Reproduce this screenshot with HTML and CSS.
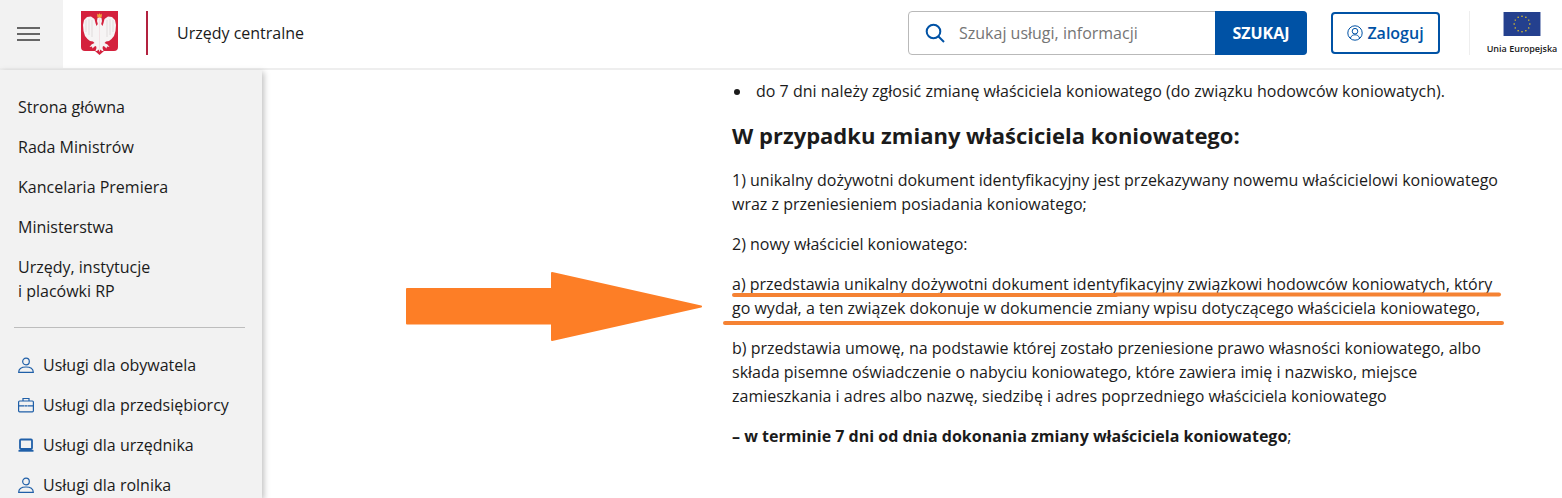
FILE: index.html
```html
<!DOCTYPE html>
<html lang="pl">

<head>
    <meta charset="UTF-8">
    <title>Urzędy centralne</title>
    <link rel="stylesheet" href="styles.css">
</head>

<body>
    <header class="topbar">
        <div class="burger">
            <span></span>
            <span></span>
            <span></span>
        </div>
        <svg class="emblem" viewBox="0 0 37 44">
            <path d="M0 0H37V36Q37 40 33 40H23L18.500 44L14 40H4Q0 40 0 36Z" fill="#d4213d" />
            <!-- orzel: polowa i jej odbicie -->
            <g id="half">
                <path d="M18.700 6L16.500 7L16 10L16.800 13L15.500 15L14.500 12L13.500 8L10 5.500L6 6L3 9L2 14L2.500 20L4 25L6.500 28L9 30L12 30.500L13.500 32L10.500 33.500L8.500 36L11 35.500L11.500 37.500L13.500 35.500L15 35L15.500 37L14.500 40L16 40L17.500 38.500L18.700 41Z" fill="#f6f4f4" />
                <path d="M5 9V21M8 8V24M11 9V26" fill="none" stroke="#d5cfcf" stroke-width=".6" />
            </g>
            <g transform="matrix(-1 0 0 1 37 0)">
                <path d="M18.700 6L16.500 7L16 10L16.800 13L15.500 15L14.500 12L13.500 8L10 5.500L6 6L3 9L2 14L2.500 20L4 25L6.500 28L9 30L12 30.500L13.500 32L10.500 33.500L8.500 36L11 35.500L11.500 37.500L13.500 35.500L15 35L15.500 37L14.500 40L16 40L17.500 38.500L18.700 41Z" fill="#f6f4f4" />
                <path d="M5 9V21M8 8V24M11 9V26" fill="none" stroke="#d5cfcf" stroke-width=".6" />
            </g>
            <path d="M16 2.500l1.200 1.200 1.300-1.500 1.300 1.500 1.200-1.200 -.4 4h-4.200z" fill="#f0a53c" />
        </svg>
        <div class="divider"></div>
        <div class="site-name">Urzędy centralne</div>
        <form class="search">
            <svg class="search-icon" viewBox="0 0 20 20">
                <circle cx="8.500" cy="8.500" r="6.800" />
                <path d="M13.500 13.500L19 19" />
            </svg>
            <span class="search-hint">Szukaj usługi, informacji</span>
            <span class="search-btn">SZUKAJ</span>
        </form>
        <a class="login">
            <svg viewBox="0 0 16 16">
                <circle cx="8" cy="8" r="7.200" />
                <circle cx="8" cy="6.200" r="2.800" />
                <path d="M3.400 13c1-2.400 2.600-3.200 4.600-3.200s3.600 .8 4.600 3.200" />
            </svg>
            Zaloguj
        </a>
        <div class="eu">
            <svg viewBox="0 0 40 26">
                <rect width="40" height="26" fill="#24408e" />
                <g fill="#ffd617">
                    <circle cx="20" cy="4.500" r=".8" />
                    <circle cx="24.200" cy="5.600" r=".8" />
                    <circle cx="27.300" cy="8.800" r=".8" />
                    <circle cx="28.500" cy="13" r=".8" />
                    <circle cx="27.300" cy="17.200" r=".8" />
                    <circle cx="24.200" cy="20.400" r=".8" />
                    <circle cx="20" cy="21.500" r=".8" />
                    <circle cx="15.800" cy="20.400" r=".8" />
                    <circle cx="12.700" cy="17.200" r=".8" />
                    <circle cx="11.500" cy="13" r=".8" />
                    <circle cx="12.700" cy="8.800" r=".8" />
                    <circle cx="15.800" cy="5.600" r=".8" />
                </g>
            </svg>
            <span>Unia Europejska</span>
        </div>
    </header>

    <div class="page">
        <nav class="sidebar">
            <ul class="menu">
                <li>Strona główna</li>
                <li>Rada Ministrów</li>
                <li>Kancelaria Premiera</li>
                <li>Ministerstwa</li>
                <li>Urzędy, instytucje<br>i placówki RP</li>
            </ul>
            <ul class="services">
                <li>
                    <svg viewBox="0 0 16 16">
                        <circle cx="8" cy="4.500" r="3.300" />
                        <path d="M.7 15.300c0-3.600 2.800-5.300 7.300-5.300s7.300 1.700 7.300 5.300z" />
                    </svg>
                    Usługi dla obywatela
                </li>
                <li>
                    <svg viewBox="0 0 16 16">
                        <rect x=".6" y="4" width="14.800" height="10.800" rx="1" />
                        <path d="M5 4V1.500h6V4M.6 8.800h6M9.400 8.800h6M7 8.800h2" />
                    </svg>
                    Usługi dla przedsiębiorcy
                </li>
                <li>
                    <svg viewBox="0 0 16 16">
                        <rect class="thick" x="2" y="2.500" width="12" height="9.500" rx="1" />
                        <path class="thick" d="M.5 13.800h15" />
                    </svg>
                    Usługi dla urzędnika
                </li>
                <li>
                    <svg viewBox="0 0 16 16">
                        <circle cx="8" cy="4.500" r="3.300" />
                        <path d="M.7 15.300c0-3.600 2.800-5.300 7.300-5.300s7.300 1.700 7.300 5.300z" />
                    </svg>
                    Usługi dla rolnika
                </li>
            </ul>
        </nav>

        <main class="content">
            <ul class="bullets">
                <li>do 7 dni należy zgłosić zmianę właściciela koniowatego (do związku hodowców koniowatych).</li>
            </ul>
            <h2>W przypadku zmiany właściciela koniowatego:</h2>
            <p>1) unikalny dożywotni dokument identyfikacyjny jest przekazywany nowemu właścicielowi koniowatego wraz z przeniesieniem posiadania koniowatego;</p>
            <p>2) nowy właściciel koniowatego:</p>
            <p>a) przedstawia unikalny dożywotni dokument identyfikacyjny związkowi hodowców koniowatych, który go wydał, a ten związek dokonuje w dokumencie zmiany wpisu dotyczącego właściciela koniowatego,</p>
            <p>b) przedstawia umowę, na podstawie której zostało przeniesione prawo własności koniowatego, albo składa pisemne oświadczenie o nabyciu koniowatego, które zawiera imię i nazwisko, miejsce zamieszkania i adres albo nazwę, siedzibę i adres poprzedniego właściciela koniowatego</p>
            <p><strong>– w terminie 7 dni od dnia dokonania zmiany właściciela koniowatego</strong>;</p>
        </main>
    </div>

    <!-- naniesione na zrzut: strzalka i podkreslenia -->
    <svg class="marks" viewBox="0 0 1562 498">
        <path class="arrow" d="M407 289H552V273L701 306.500L552 340V323.500H407Z" />
        <path class="stroke" d="M734 295H1116" />
        <path class="stroke" d="M1116 294.500H1499" />
        <path class="stroke" d="M725 323H1502" />
    </svg>
</body>

</html>
```

FILE: styles.css
```css
* {
    box-sizing: border-box;
}

html,
body {
    height: 498px;
    overflow: hidden;
}

body {
    margin: 0;
    font-family: "Open Sans", sans-serif;
    font-size: 16px;
    color: #1b1b1b;
    background-color: #fff;
}

/* top bar */

.topbar {
    display: flex;
    align-items: center;
    height: 70px;
    padding-bottom: 2px;
    border-bottom: 2px solid #eeeeee;
}

.burger {
    display: flex;
    flex-direction: column;
    justify-content: center;
    flex-shrink: 0;
    gap: 4px;
    width: 63px;
    height: 68px;
    margin-bottom: -2px;
    padding: 0 0 1px 17px;
    background-color: #f2f2f2;
}

.burger span {
    width: 23px;
    height: 2px;
    background-color: #666;
}

.emblem {
    flex-shrink: 0;
    width: 37px;
    height: 44px;
    margin-left: 18px;
}

.divider {
    width: 2px;
    height: 44px;
    margin-left: 28px;
    background-color: #b2223f;
}

.site-name {
    margin-left: 29px;
    font-size: 16px;
}

.search {
    display: flex;
    align-items: center;
    width: 399px;
    height: 44px;
    margin-left: auto;
    border: 1px solid #b9b9b9;
    border-radius: 4px;
}

.search-icon {
    width: 20px;
    height: 20px;
    margin-left: 16px;
    fill: none;
    stroke: #0052a5;
    stroke-width: 2;
}

.search-hint {
    flex: 1;
    margin-left: 14px;
    color: #757575;
}

.search-btn {
    display: flex;
    align-items: center;
    justify-content: center;
    width: 92px;
    height: 44px;
    margin-right: -1px;
    font-size: 16px;
    font-weight: 700;
    color: #fff;
    background-color: #0052a5;
    border-radius: 0 4px 4px 0;
}

.login {
    display: flex;
    align-items: center;
    justify-content: center;
    gap: 4px;
    width: 109px;
    height: 42px;
    margin-left: 24px;
    font-weight: 600;
    color: #0052a5;
    border: 2px solid #0052a5;
    border-radius: 4px;
}

.login svg {
    width: 16px;
    height: 16px;
    fill: none;
    stroke: #0052a5;
    stroke-width: 1;
}

.eu {
    display: flex;
    flex-direction: column;
    align-items: center;
    width: 93px;
    height: 44px;
    margin-left: 29px;
    padding: 1px 0 0 12px;
    border-left: 1px solid #eee;
}

.eu svg {
    width: 40px;
    height: 26px;
}

.eu span {
    margin-top: 6px;
    font-size: 9px;
    font-weight: 600;
    white-space: nowrap;
}

/* layout */

.page {
    display: flex;
    height: 428px;
}

.sidebar {
    flex-shrink: 0;
    width: 262px;
    padding: 0 17px 0 14px;
    background-color: #f2f2f2;
    box-shadow: 2px 2px 6px rgba(0, 0, 0, 0.25);
}

.menu,
.services {
    margin: 0;
    padding: 0;
    list-style: none;
}

.menu {
    padding-top: 25px;
    padding-bottom: 24px;
    border-bottom: 1px solid #bdbdbd;
}

.menu li {
    padding-left: 4px;
    margin-bottom: 16px;
    line-height: 24px;
}

.menu li:last-child {
    margin-bottom: 0;
}

.services {
    padding-top: 25px;
}

.services li {
    display: flex;
    align-items: center;
    gap: 9px;
    height: 24px;
    margin-bottom: 16px;
    padding-left: 4px;
}

.services svg {
    flex-shrink: 0;
    width: 16px;
    height: 16px;
    fill: none;
    stroke: #1f5fa8;
    stroke-width: 1.200;
}

.services svg .thick {
    stroke-width: 1.800;
}

/* article */

.content {
    width: 774px;
    margin-left: 470px;
    line-height: 24px;
}

.bullets {
    margin: 9px 0 0;
    padding: 0;
    list-style: none;
}

.bullets li {
    display: flex;
}

.bullets li::before {
    content: '';
    flex-shrink: 0;
    width: 6px;
    height: 6px;
    margin: 10px 16px 0 2px;
    border-radius: 50%;
    background-color: #1b1b1b;
}

h2 {
    margin: 17px 0 18px;
    font-size: 22px;
    line-height: 30px;
    font-weight: 700;
}

p {
    margin: 0 0 16px;
}

.marks {
    position: absolute;
    top: 0;
    left: 0;
    width: 1562px;
    height: 498px;
    pointer-events: none;
}

.arrow {
    fill: #fd7e26;
    stroke: #fd7e26;
    stroke-width: 2;
    stroke-linejoin: round;
}

.stroke {
    fill: none;
    stroke: #f58233;
    stroke-width: 4;
    stroke-linecap: round;
}
```
